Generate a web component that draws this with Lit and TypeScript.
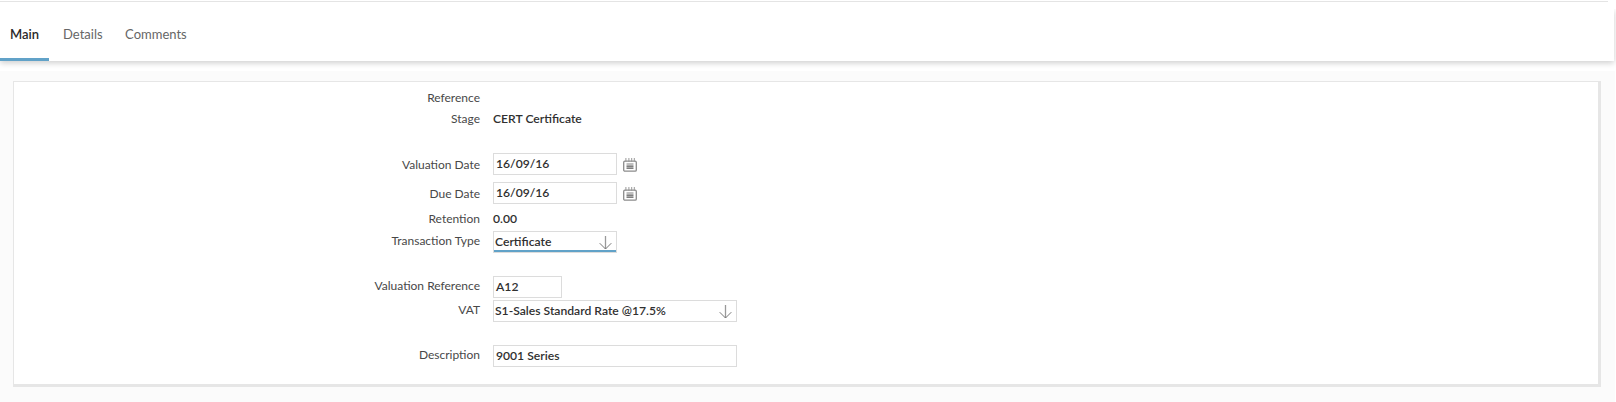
import { LitElement, html, css, svg, nothing } from "lit";
import { customElement, property, state } from "lit/decorators.js";
import { classMap } from "lit/directives/class-map.js";

type Kind = "text" | "input" | "date" | "select";

interface Field {
  label: string;
  value: string;
  kind: Kind;
  row: string;
  size?: string;
  active?: boolean;
}

const FIELDS: Field[] = [
  { label: "Reference", value: "", kind: "text", row: "first" },
  { label: "Stage", value: "CERT Certificate", kind: "text", row: "stage" },
  { label: "Valuation Date", value: "16/09/16", kind: "date", row: "valuation" },
  { label: "Due Date", value: "16/09/16", kind: "date", row: "due" },
  { label: "Retention", value: "0.00", kind: "text", row: "retention" },
  { label: "Transaction Type", value: "Certificate", kind: "select", row: "type", active: true },
  { label: "Valuation Reference", value: "A12", kind: "input", row: "ref", size: "short" },
  { label: "VAT", value: "S1-Sales Standard Rate @17.5%", kind: "select", row: "vat", size: "long" },
  { label: "Description", value: "9001 Series", kind: "input", row: "desc", size: "long" },
];

const calendarIcon = svg`
  <rect x="0.7" y="3.2" width="12.6" height="10" rx="1.2" fill="#fff" stroke="#8c8c8c" stroke-width="1.3"/>
  <path d="M2.9 0v4M5.9 0v4M8.7 0v4M11.3 0v4" stroke="#999" stroke-width="1"/>
  <path d="M3.5 6h7M3.5 8.5h7M3.5 10.5h7" stroke="#808080" stroke-width="1"/>
  <path d="M3.5 7.5h7M3.5 9.5h7" stroke="#aaa" stroke-width="1"/>`;

@customElement("form-field")
class FormField extends LitElement {
  @property({ attribute: false }) field!: Field;

  static styles = css`
    :host { display: block; }
    .row { box-sizing: border-box; display: grid; grid-template-columns: 466px 1fr; column-gap: 13px; align-items: start; }
    .label { text-align: right; color: #484848; line-height: 16px; white-space: nowrap; }
    .value { display: flex; color: #303030; font-size: 12.15px; line-height: 16px; font-weight: 600; white-space: nowrap; }
    .box { box-sizing: border-box; display: flex; justify-content: space-between; width: 124px; height: 22px; padding: 2px 3px 0 2px; border: 1px solid #dcdcdc; background: #fff; }
    .short { width: 69px; }
    .long { width: 244px; }
    .select { padding-left: 1px; }
    .active { box-shadow: inset 0 -2px #61a2c8; }
    .arrow { margin-top: 2px; }
    .calendar { margin: 5px 0 0 6px; }
    .first { height: 21px; }
    .stage { height: 42px; }
    .valuation { height: 29px; }
    .due { height: 28px; }
    .retention { height: 21px; padding-top: 1px; }
    .type { height: 45px; }
    .ref { height: 24px; }
    .vat { height: 45px; }
    .desc { height: 39px; }
    .valuation .label, .due .label { padding-top: 4px; }
    .type .label, .ref .label, .vat .label, .desc .label { padding-top: 2px; }
  `;

  render() {
    const f = this.field;
    return html`<div class="row ${f.row}">
      <div class="label">${f.label}</div>
      <div class="value">
        ${f.kind === "text"
          ? f.value
          : html`<div class="box ${f.kind} ${f.size ?? ""} ${f.active ? "active" : ""}">
              <span>${f.value}</span>
              ${f.kind === "select"
                ? html`<svg class="arrow" width="14" height="15" viewBox="0 0 14 15" fill="none" stroke="#777">
                    <path d="M6.5 0V13" stroke="#999" stroke-width="1.3"/><path d="M0.7 7.2L6.5 13L12.3 7.2"/></svg>`
                : nothing}
            </div>`}
        ${f.kind === "date" ? html`<svg class="calendar" width="14" height="14" viewBox="0 0 14 14">${calendarIcon}</svg>` : nothing}
      </div>
    </div>`;
  }
}

@customElement("app-root")
class AppRoot extends LitElement {
  @state() private tab = "Main";

  static styles = css`
    :host { display: block; height: 402px; overflow: hidden; background: #fff; font-family: Lato, "Open Sans", sans-serif; font-size: 12px; }
    .rule { width: 1608px; height: 1px; margin-top: 1px; background: #e4e4e4; }
    .page { display: flow-root; }
    .tabs { display: flex; width: 1614px; height: 52px; margin-top: 7px; background: #fff; box-shadow: 0 2px 6px rgba(0, 0, 0, 0.2); clip-path: inset(0 -6px -10px 0); }
    .tab { box-sizing: border-box; height: 52px; padding: 17px 10px 0; margin-right: 2.5px; border-bottom: 3px solid transparent; font-size: 13px; line-height: 16px; color: #666; cursor: pointer; }
    .tab:first-child { margin-right: 4px; }
    .selected { color: #2a2a2a; font-weight: 600; border-bottom-color: #61a2c8; }
    .body { box-sizing: border-box; width: 1615px; height: 331px; margin-top: 10px; padding: 10px 14px 0 13px; background: #fbfbfb; }
    .panel { box-sizing: border-box; height: 306px; padding-top: 8px; border: 1px solid #e6e6e6; border-right-width: 3px; border-bottom-width: 3px; background: #fff; }
  `;

  render() {
    return html`<div class="page">
      <div class="rule"></div>
      <nav class="tabs">
        ${["Main", "Details", "Comments"].map(
          (t) => html`<div class=${classMap({ tab: true, selected: t === this.tab })} @click=${() => (this.tab = t)}>${t}</div>`,
        )}
      </nav>
      <main class="body">
        <section class="panel">${FIELDS.map((f) => html`<form-field .field=${f}></form-field>`)}</section>
      </main>
    </div>`;
  }
}
